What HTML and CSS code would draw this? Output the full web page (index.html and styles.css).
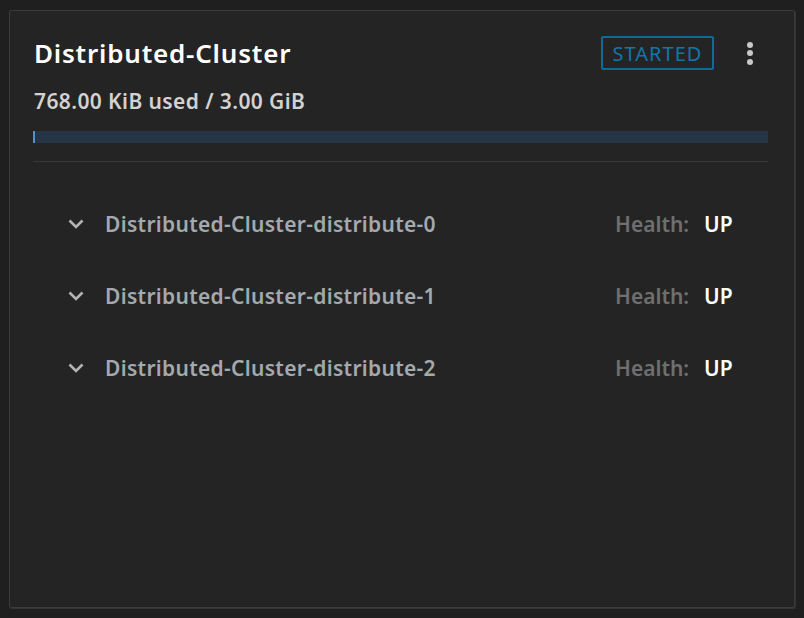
FILE: index.html
```html
<!DOCTYPE html>
<html>
<head>
<meta charset="utf-8">
<link rel="stylesheet" href="styles.css">
</head>
<body>
<div class="card">
  <div class="header">
    <h1 class="title">Distributed-Cluster</h1>
    <div class="actions">
      <span class="badge">STARTED</span>
      <span class="kebab"><i></i><i></i><i></i></span>
    </div>
  </div>
  <div class="usage">768.00 KiB used / 3.00 GiB</div>
  <div class="bar"><div class="fill" style="width:0.1%"></div></div>
  <div class="sep"></div>
  <ul class="list">
    <li class="row">
      <svg class="chev" width="16" height="10" viewBox="0 0 16 10"><path d="M1.5 1.5 L8 8 L14.5 1.5" fill="none" stroke="#b4b4b4" stroke-width="2.6"/></svg>
      <span class="name">Distributed-Cluster-distribute-0</span>
      <span class="health">Health:</span><span class="status">UP</span>
    </li>
    <li class="row">
      <svg class="chev" width="16" height="10" viewBox="0 0 16 10"><path d="M1.5 1.5 L8 8 L14.5 1.5" fill="none" stroke="#b4b4b4" stroke-width="2.6"/></svg>
      <span class="name">Distributed-Cluster-distribute-1</span>
      <span class="health">Health:</span><span class="status">UP</span>
    </li>
    <li class="row">
      <svg class="chev" width="16" height="10" viewBox="0 0 16 10"><path d="M1.5 1.5 L8 8 L14.5 1.5" fill="none" stroke="#b4b4b4" stroke-width="2.6"/></svg>
      <span class="name">Distributed-Cluster-distribute-2</span>
      <span class="health">Health:</span><span class="status">UP</span>
    </li>
  </ul>
</div>
</body>
</html>
```

FILE: styles.css
```css
html, body {
  margin: 0;
  padding: 0;
  background: #1f1f1f;
}
body {
  padding: 10px 9px 10px 9px;
  font-family: "Noto Sans", sans-serif;
}
.card {
  box-sizing: border-box;
  width: 786px;
  height: 598px;
  background: #242424;
  border: 1px solid #3b3b3b;
  border-radius: 2px;
  box-shadow: 1px 1px 0 #333;
  padding: 24px 24px 0 24px;
}
.header {
  display: flex;
  justify-content: space-between;
  align-items: flex-start;
  height: 56px;
}
.title {
  margin: 0;
  line-height: 36px;
  font-size: 26px;
  font-weight: 600;
  letter-spacing: 0.8px;
  color: #ffffff;
}
.actions {
  display: flex;
  align-items: center;
  gap: 33px;
  margin-top: 1px;
}
.badge {
  box-sizing: border-box;
  width: 113px;
  height: 34px;
  border: 2px solid #0b6c9c;
  border-radius: 2px;
  color: #0f77aa;
  font-size: 20px;
  letter-spacing: 1px;
  display: flex;
  align-items: center;
  justify-content: center;
}
.kebab {
  display: flex;
  flex-direction: column;
  gap: 2.5px;
  margin-right: 17px;
}
.kebab i {
  width: 6px;
  height: 6px;
  border-radius: 50%;
  background: #c9c9c9;
}
.usage {
  font-size: 21px;
  line-height: 24px;
  font-weight: 600;
  letter-spacing: 0.4px;
  color: #d2d2d2;
  height: 40px;
  margin-top: -2px;
}
.bar {
  width: 735px;
  height: 12px;
  background: #263545;
  margin-left: -1px;
  margin-top: 2px;
}
.fill {
  height: 100%;
  min-width: 2px;
  background: #4f8fd6;
}
.sep {
  width: 735px;
  height: 1px;
  background: #383838;
  margin: 18px 0 0 -1px;
}
.list {
  list-style: none;
  margin: 26px 0 0 0;
  padding: 0;
}
.row {
  display: flex;
  align-items: center;
  height: 72px;
  font-size: 21px;
  font-weight: 600;
}
.chev {
  margin-left: 34px;
  margin-right: 21px;
}
.name {
  color: #a3a9ae;
  flex: 1;
  letter-spacing: 0.3px;
}
.health {
  color: #6f6f6f;
  width: 89px;
}
.status {
  color: #ffffff;
  width: 66px;
}
```
